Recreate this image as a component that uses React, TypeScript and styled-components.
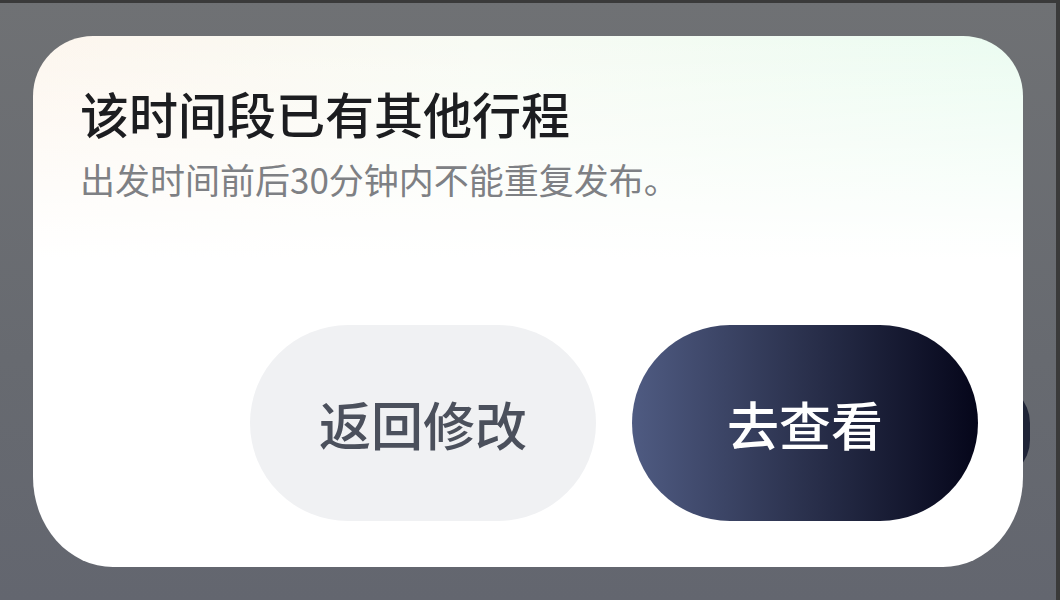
import styled, { createGlobalStyle } from "styled-components";

const Global = createGlobalStyle`
  html, body {
    margin: 0;
    padding: 0;
    background: #676a70;
    font-family: "Noto Sans CJK SC", "Noto Sans", sans-serif;
  }
`;

export default function App() {
  return (
    <Screen>
      <Global />
      <TopBar />
      <Body>
        <Overlay>
          <Peek />
          <Dialog>
            <Title>该时间段已有其他行程</Title>
            <Desc>出发时间前后30分钟内不能重复发布。</Desc>
            <Actions>
              <Btn>返回修改</Btn>
              <Btn primary>去查看</Btn>
            </Actions>
          </Dialog>
        </Overlay>
        <EdgeStrip />
      </Body>
    </Screen>
  );
}

const Screen = styled.div`
  width: 1060px;
  height: 600px;
  display: flex;
  flex-direction: column;
  overflow: hidden;
  background: linear-gradient(180deg, #6f7174 0%, #676a70 60%, #63666f 100%);
`;
const TopBar = styled.div`
  height: 3px;
  background: #3a3a3a;
`;
const Body = styled.div`
  flex: 1;
  display: flex;
`;
const Overlay = styled.div`
  position: relative;
  flex: 1;
  padding: 33px 0 0 33px;
`;
// dark shape of the page below, peeking out on the right side
const Peek = styled.div`
  position: absolute;
  left: 960px;
  top: 380px;
  width: 70px;
  height: 97px;
  border-radius: 0 40px 40px 0;
  background: #1f2437;
`;
const Dialog = styled.div`
  position: relative;
  width: 990px;
  height: 531px;
  box-sizing: border-box;
  padding: 45px 45px 46px 47px;
  display: flex;
  flex-direction: column;
  border-radius: 60px 60px 80px 80px / 60px 60px 90px 90px;
  background:
    linear-gradient(180deg, rgba(255, 255, 255, 0) 0%, #ffffff 42%),
    linear-gradient(90deg, #fdf6ee 0%, #f8fbf4 45%, #ebfcf1 100%);
`;
const Title = styled.div`
  font-size: 49px;
  line-height: 64px;
  font-weight: 500;
  color: #1c1d20;
`;
const Desc = styled.div`
  margin-top: 12px;
  font-size: 35px;
  line-height: 44px;
  color: #7e8084;
`;
const Actions = styled.div`
  margin-top: auto;
  display: flex;
  justify-content: flex-end;
  gap: 36px;
`;
const Btn = styled.div<{ primary?: boolean }>`
  width: 346px;
  height: 196px;
  border-radius: 98px;
  display: flex;
  align-items: center;
  justify-content: center;
  font-size: 52px;
  font-weight: 500;
  color: ${(p) => (p.primary ? "#ffffff" : "#4b505c")};
  background: ${(p) =>
    p.primary
      ? "linear-gradient(90deg, #4f5b82 0%, #2e3552 45%, #05061a 100%)"
      : "#f0f1f3"};
`;
const EdgeStrip = styled.div`
  width: 4px;
  background: #3a3a3a;
`;
